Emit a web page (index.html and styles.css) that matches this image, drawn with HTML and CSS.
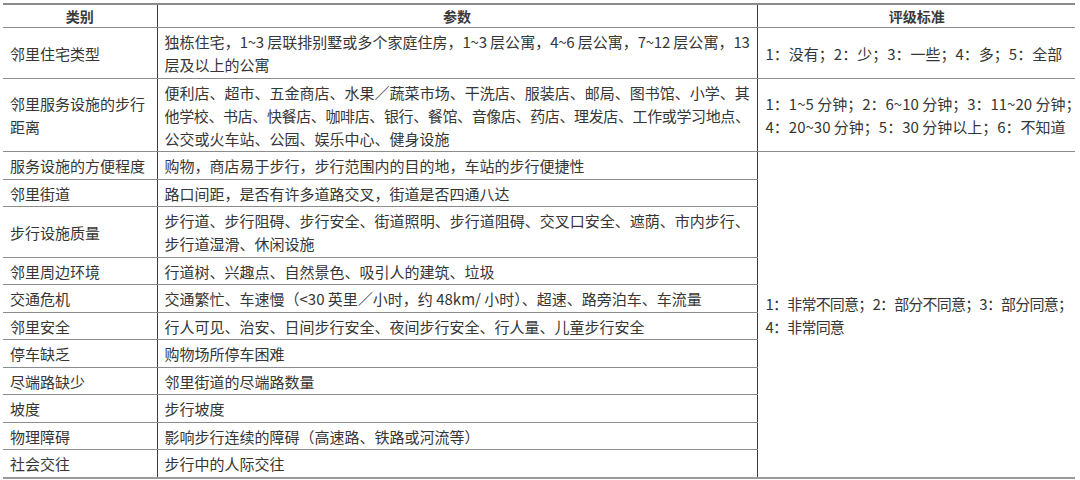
FILE: index.html
```html
<!DOCTYPE html>
<html lang="zh-CN">
<head>
<meta charset="utf-8">
<title>步行环境评价指标</title>
<link rel="stylesheet" href="styles.css">
</head>
<body>
<table class="tbl">
  <colgroup>
    <col class="c1"><col class="c2"><col class="c3">
  </colgroup>
  <thead>
    <tr><th>类别</th><th>参数</th><th class="last">评级标准</th></tr>
  </thead>
  <tbody>
    <tr>
      <td>邻里住宅类型</td>
      <td><span class="l f">独栋住宅，1~3 层联排别墅或多个家庭住房，1~3 层公寓，4~6 层公寓，7~12 层公寓，13</span><span class="l">层及以上的公寓</span></td>
      <td class="last">1：没有；2：少；3：一些；4：多；5：全部</td>
    </tr>
    <tr>
      <td>邻里服务设施的步行距离</td>
      <td><span class="l f">便利店、超市、五金商店、水果／蔬菜市场、干洗店、服装店、邮局、图书馆、小学、其</span><span class="l f t">他学校、书店、快餐店、咖啡店、银行、餐馆、音像店、药店、理发店、工作或学习地点、</span><span class="l">公交或火车站、公园、娱乐中心、健身设施</span></td>
      <td class="last"><span class="l">1：1~5 分钟；2：6~10 分钟；3：11~20 分钟；</span><span class="l">4：20~30 分钟；5：30 分钟以上；6：不知道</span></td>
    </tr>
    <tr>
      <td>服务设施的方便程度</td>
      <td>购物，商店易于步行，步行范围内的目的地，车站的步行便捷性</td>
      <td class="last big" rowspan="11"><span class="l">1：非常不同意；2：部分不同意；3：部分同意；</span><span class="l">4：非常同意</span></td>
    </tr>
    <tr><td>邻里街道</td><td>路口间距，是否有许多道路交叉，街道是否四通八达</td></tr>
    <tr>
      <td>步行设施质量</td>
      <td><span class="l f">步行道、步行阻碍、步行安全、街道照明、步行道阻碍、交叉口安全、遮荫、市内步行、</span><span class="l">步行道湿滑、休闲设施</span></td>
    </tr>
    <tr><td>邻里周边环境</td><td>行道树、兴趣点、自然景色、吸引人的建筑、垃圾</td></tr>
    <tr><td>交通危机</td><td>交通繁忙、车速慢（&lt;30 英里／小时，约 48km/ 小时）、超速、路旁泊车、车流量</td></tr>
    <tr><td>邻里安全</td><td>行人可见、治安、日间步行安全、夜间步行安全、行人量、儿童步行安全</td></tr>
    <tr><td>停车缺乏</td><td>购物场所停车困难</td></tr>
    <tr><td>尽端路缺少</td><td>邻里街道的尽端路数量</td></tr>
    <tr><td>坡度</td><td>步行坡度</td></tr>
    <tr><td>物理障碍</td><td>影响步行连续的障碍（高速路、铁路或河流等）</td></tr>
    <tr><td>社会交往</td><td>步行中的人际交往</td></tr>
  </tbody>
</table>
</body>
</html>
```

FILE: styles.css
```css
html, body {
  margin: 0;
  padding: 0;
  background: #ffffff;
}

body {
  padding: 3px 5px 0 3px;
  font-family: "Noto Sans CJK SC", "Noto Sans", sans-serif;
  color: #363636;
}

.tbl {
  border-collapse: collapse;
  table-layout: fixed;
  width: 1072px;
  border-top: 2px solid #8c8c8c;
  border-bottom: 2px solid #9a9a9a;
}

.c1 { width: 154px; }
.c2 { width: 600px; }
.c3 { width: 318px; }

.tbl th {
  font-size: 14px;
  font-weight: 700;
  line-height: 19px;
  height: 23px;
  box-sizing: border-box;
  padding: 2px 7px 1px;
  text-align: center;
  color: #3a3a3a;
  border-right: 1px solid #3c3c3c;
  border-bottom: 1px solid #8c8c8c;
}

.tbl td {
  font-size: 15px;
  line-height: 23px;
  padding: 2px 7px 1.5px;
  text-align: left;
  vertical-align: middle;
  border-right: 1px solid #3c3c3c;
  border-bottom: 1px solid #8c8c8c;
}

.tbl .last {
  border-right: none;
  padding-left: 8px;
}

.l {
  display: block;
  white-space: nowrap;
}

.f {
  text-align: justify;
  text-align-last: justify;
  letter-spacing: -0.3px;
}

.t {
  letter-spacing: -0.45px;
}

.big {
  letter-spacing: -0.8px;
  padding-top: 8px;
}
```
